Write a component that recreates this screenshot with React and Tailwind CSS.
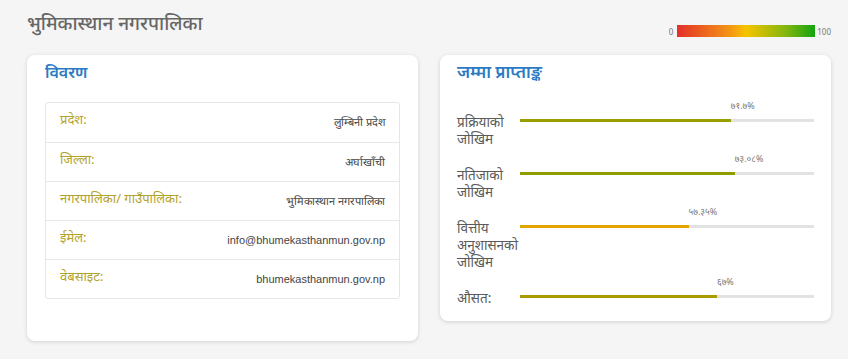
const details = [
  { label: "प्रदेश:", value: "लुम्बिनी प्रदेश" },
  { label: "जिल्ला:", value: "अर्घाखाँची" },
  { label: "नगरपालिका/ गाउँपालिका:", value: "भुमिकास्थान नगरपालिका" },
  { label: "ईमेल:", value: "info@bhumekasthanmun.gov.np" },
  { label: "वेबसाइट:", value: "bhumekasthanmun.gov.np" },
];

const scores = [
  { label: ["प्रक्रियाको", "जोखिम"], pct: 71.7, text: "७१.७%", color: "bg-[#9a9f00]" },
  { label: ["नतिजाको", "जोखिम"], pct: 73.08, text: "७३.०८%", color: "bg-[#8f9c00]" },
  { label: ["वित्तीय", "अनुशासनको", "जोखिम"], pct: 57.35, text: "५७.३५%", color: "bg-[#e3a500]" },
  { label: ["औसत:"], pct: 67, text: "६७%", color: "bg-[#aa9b00]" },
];

export default function App() {
  return (
    <div className="min-h-[359px] bg-[#f5f5f5] pl-[27px] pr-[17px] pt-[8px] font-['Noto_Sans',sans-serif]">
      {/* header */}
      <div className="flex items-start justify-between h-[47px]">
        <h1 className="text-[19px] leading-[30px] font-medium text-[#676767]">भुमिकास्थान नगरपालिका</h1>
        <div className="flex items-end mt-[17px]">
          <span className="text-[8px] leading-[8px] text-[#777] mb-[1px] mr-[4px]">0</span>
          <div className="w-[138px] h-[12px] bg-[linear-gradient(90deg,#e3302a,#f49a12_40%,#f7c400_50%,#7db50e_80%,#13a412)]" />
          <span className="text-[8px] leading-[8px] text-[#777] mb-[1px] ml-[2px]">100</span>
        </div>
      </div>

      <div className="grid grid-cols-2 gap-[22px] items-start">
        {/* details card */}
        <div className="bg-white rounded-[8px] shadow-[0_1px_4px_rgba(0,0,0,0.15)] px-[18px] pt-[5px] pb-[42px]">
          <h2 className="text-[16px] leading-[24px] font-semibold text-[#2b7bc4]">विवरण</h2>
          <div className="mt-[18px] border border-[#e6e6e6] rounded-[3px]">
            {details.map((d, i) => (
              <div
                key={i}
                className={`flex justify-between items-start h-[39px] px-[14px] pt-[6px] ${i ? "border-t border-[#e8e8e8]" : ""}`}
              >
                <span className="text-[13px] leading-[20px] text-[#b3a229]">{d.label}</span>
                <span className="font-['Liberation_Sans',sans-serif] text-[11px] leading-[20px] mt-[3px] text-[#444]">{d.value}</span>
              </div>
            ))}
          </div>
        </div>

        {/* score card */}
        <div className="bg-white rounded-[8px] shadow-[0_1px_4px_rgba(0,0,0,0.15)] px-[17px] pt-[5px] pb-[14px]">
          <h2 className="text-[17px] leading-[24px] font-semibold text-[#2b7bc4]">जम्मा प्राप्ताङ्क</h2>
          <div className="mt-[16px] flex flex-col gap-[5px]">
            {scores.map((s, i) => (
              <div key={i} className="flex items-start gap-[3px]">
                <div className="w-[60px] mt-[14px] text-[13.5px] leading-[17px] text-[#5a5a5a]">
                  {s.label.map((l, j) => (
                    <div key={j}>{l}</div>
                  ))}
                </div>
                <div className="flex-1">
                  <div className="relative h-[14px]">
                    <span
                      className="absolute top-0 text-[9px] leading-[12px] text-[#777]"
                      style={{ left: `${s.pct}%` }}
                    >
                      {s.text}
                    </span>
                  </div>
                  <div className="mt-[5px] h-[3px] bg-[#e2e2e2]">
                    <div className={`h-full ${s.color}`} style={{ width: `${s.pct}%` }} />
                  </div>
                </div>
              </div>
            ))}
          </div>
        </div>
      </div>
    </div>
  );
}
